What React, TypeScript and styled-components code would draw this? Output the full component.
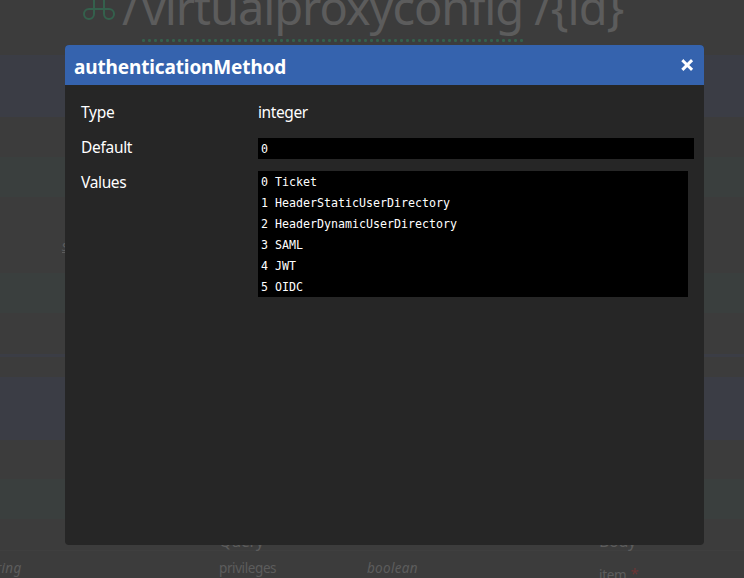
import React from 'react';
import styled, { createGlobalStyle } from 'styled-components';

const GlobalStyle = createGlobalStyle`
  *, *::before, *::after { box-sizing: border-box; }
  html, body { margin: 0; height: 578px; overflow: hidden; background: #3c3c3c; }
`;

const Screen = styled.div`
  position: relative;
  width: 744px;
  height: 578px;
  overflow: hidden;
  background: #3c3c3c;
  color: #5c5c5c;
  font-family: 'Noto Sans', 'Open Sans', sans-serif;
`;

const Page = styled.main`
  display: flex;
  flex-direction: column;
`;

const PageTitle = styled.h1`
  display: flex;
  align-items: flex-start;
  height: 55px;
  margin: 0;
  padding-left: 83px;
  font-size: 47px;
  font-weight: 400;
  line-height: 64px;
  white-space: pre;
`;

const CommandIcon = styled.svg`
  flex: none;
  width: 32px;
  height: 32px;
  margin: -12px 7px 0 0;
`;

const TitleText = styled.span<{ $spacing: number; $width: number }>`
  flex: none;
  width: ${(p) => p.$width}px;
  height: 64px;
  margin-top: -25px;
  letter-spacing: ${(p) => p.$spacing}px;
`;

const TitleTerm = styled(TitleText)`
  height: 68px;
  background: radial-gradient(circle at 1.5px 1.5px, #34604c 1.2px, transparent 1.9px) 0 64px / 6px 4px repeat-x;
`;

const tones = { plain: '#3c3c3c', blue: '#3b3d45', green: '#3a3f3e' };

const Band = styled.div<{ $height: number; $tone: keyof typeof tones }>`
  height: ${(p) => p.$height}px;
  background: ${(p) => tones[p.$tone]};
`;

const PropertyBand = styled(Band)`
  padding: 37px 0 0 62px;
`;

const Label = styled.span<{ $spacing?: number }>`
  font-size: 13.5px;
  line-height: 20px;
  letter-spacing: ${(p) => p.$spacing ?? 0}px;
  white-space: nowrap;
`;

const TypeLink = styled(Label)`
  font-style: italic;
`;

const UnderlinedType = styled(TypeLink)`
  text-decoration: underline;
`;

const Parameters = styled.section`
  display: grid;
  grid-template-columns: 219px 148px 232px 1fr;
  grid-template-rows: 32px 27px;
`;

const GroupHeading = styled.h2`
  margin: 0;
  padding-top: 10px;
  border-bottom: 1px solid #3f3f3f;
  font-size: 16px;
  font-weight: 400;
  line-height: 24px;
  letter-spacing: -0.3px;
`;

const Cell = styled.div<{ $top?: number; $left?: number }>`
  display: flex;
  margin-left: ${(p) => p.$left ?? 0}px;
  padding: ${(p) => p.$top ?? 7}px 0 0;
  line-height: 20px;
  white-space: nowrap;
`;

const Required = styled.span`
  margin-left: 4px;
  color: #6a3636;
  font-size: 15px;
  line-height: 16px;
`;

const Dialog = styled.div`
  position: absolute;
  left: 65px;
  top: 45px;
  width: 639px;
  height: 500px;
  border-radius: 4px;
  overflow: hidden;
  background: #262626;
  color: #fff;
`;

const DialogHeader = styled.header`
  display: flex;
  justify-content: space-between;
  align-items: flex-start;
  height: 40px;
  padding: 0 10px 0 9px;
  background: #3563ae;
`;

const DialogTitle = styled.h3`
  margin: 0;
  padding-top: 8px;
  font-size: 19px;
  line-height: 28px;
  font-weight: 700;
  letter-spacing: -0.14px;
`;

const CloseButton = styled.button`
  display: flex;
  margin-top: 13px;
  padding: 0;
  border: 0;
  background: none;
`;

const DialogBody = styled.dl`
  display: grid;
  grid-template-columns: 177px 1fr;
  grid-template-rows: 35px 35px auto;
  margin: 0;
  padding: 15px 10px 0 16px;
`;

const Term = styled.dt<{ $spacing: number }>`
  font-size: 15.5px;
  line-height: 24px;
  letter-spacing: ${(p) => p.$spacing}px;
`;

const Value = styled.dd`
  margin: 0;
  font-size: 15.5px;
  line-height: 24px;
  letter-spacing: -0.4px;
`;

const CodeBlock = styled.pre<{ $width: number; $top: number }>`
  width: ${(p) => p.$width}px;
  height: ${(p) => p.$top === 3 ? 21 : 126}px;
  margin: ${(p) => p.$top}px 0 0;
  padding: 1px 3px 0;
  background: #000;
  font-family: 'DejaVu Sans Mono', monospace;
  font-size: 11.63px;
  line-height: 21px;
  letter-spacing: 0;
`;

const values = ['Ticket', 'HeaderStaticUserDirectory', 'HeaderDynamicUserDirectory', 'SAML', 'JWT', 'OIDC'];

export default function App() {
  return (
    <>
      <GlobalStyle />
      <Screen>
        <Page>
          <PageTitle>
            <CommandIcon viewBox="0 0 32 32" fill="none" stroke="#34604c" strokeWidth="2">
              <path d="M11 11v10M21 11v10M11 11h10M11 21h10M11 11H6a5 5 0 1 1 5-5zM21 11V6a5 5 0 1 1 5 5zM11 21v5a5 5 0 1 1-5-5zM21 21h5a5 5 0 1 1-5 5z" />
            </CommandIcon>
            <TitleText $width={20} $spacing={0}>/</TitleText>
            <TitleTerm $width={381} $spacing={-1.1}>virtualproxyconfig</TitleTerm>
            <TitleText $width={120} $spacing={-1}> /{'{id}'}</TitleText>
          </PageTitle>
          <Band $height={62} $tone="blue" />
          <Band $height={40} $tone="plain" />
          <Band $height={40} $tone="green" />
          <PropertyBand $height={76} $tone="plain">
            <UnderlinedType>string</UnderlinedType>
          </PropertyBand>
          <Band $height={40} $tone="green" />
          <Band $height={41} $tone="plain" />
          <Band $height={3} $tone="blue" />
          <Band $height={20} $tone="plain" />
          <Band $height={63} $tone="blue" />
          <Band $height={39} $tone="plain" />
          <Band $height={40} $tone="green" />
          <Parameters>
            <GroupHeading />
            <GroupHeading>Query</GroupHeading>
            <GroupHeading />
            <GroupHeading>Body</GroupHeading>
            <Cell $left={-15}><TypeLink $spacing={0.3}>string</TypeLink></Cell>
            <Cell><Label $spacing={-0.4}>privileges</Label></Cell>
            <Cell><TypeLink $spacing={0.3}>boolean</TypeLink></Cell>
            <Cell $top={14}><Label $spacing={-0.3}>item</Label><Required>*</Required></Cell>
          </Parameters>
        </Page>
        <Dialog role="dialog">
          <DialogHeader>
            <DialogTitle>authenticationMethod</DialogTitle>
            <CloseButton aria-label="Close">
              <svg width="14" height="14" viewBox="0 0 14 14" stroke="#fff" strokeWidth="3" strokeLinecap="square">
                <path d="M3.4 3.2l7.6 7.6M11 3.2l-7.6 7.6" />
              </svg>
            </CloseButton>
          </DialogHeader>
          <DialogBody>
            <Term $spacing={-0.25}>Type</Term>
            <Value>integer</Value>
            <Term $spacing={-0.3}>Default</Term>
            <Value><CodeBlock $width={436} $top={3}>0</CodeBlock></Value>
            <Term $spacing={-0.35}>Values</Term>
            <Value>
              <CodeBlock $width={430} $top={1}>{values.map((name, i) => `${i} ${name}`).join('\n')}</CodeBlock>
            </Value>
          </DialogBody>
        </Dialog>
      </Screen>
    </>
  );
}
